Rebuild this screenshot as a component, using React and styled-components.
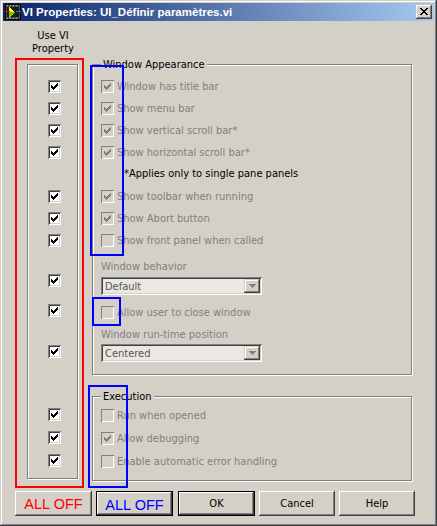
import React from 'react'
import styled, { createGlobalStyle } from 'styled-components'

const GlobalStyle = createGlobalStyle`
  html, body {
    margin: 0;
    padding: 0;
    background: #d4d0c8;
  }
  body {
    font-family: "DejaVu Sans Condensed", "Liberation Sans", sans-serif;
    font-size: 11px;
  }
`

const CHECK = ['......#', '.....##', '#...###', '##.###.', '#####..', '.###...', '..#....']
const checkPath = CHECK.map((row, y) =>
  [...row].map((c, x) => (c === '#' ? `M${x} ${y}h1v1h-1z` : '')).join('')
).join('')

const CLOSE_X = ['##....##', '.##..##.', '..####..', '...##...', '..####..', '.##..##.', '##....##']
const closePath = CLOSE_X.map((row, y) =>
  [...row].map((c, x) => (c === '#' ? `M${x} ${y}h1v1h-1z` : '')).join('')
).join('')

// tops of the left column boxes, in page pixels
const leftTops = [80, 102, 124, 146, 190, 212, 234, 274, 304, 345, 408, 431, 454]

export default function App() {
  return (
    <Window>
      <GlobalStyle />
      <TitleBar>
        <VIIcon />
        <Title>VI Properties: UI_Définir paramètres.vi</Title>
        <CloseButton>
          <svg width="8" height="7" viewBox="0 0 8 7" shapeRendering="crispEdges">
            <path d={closePath} fill="#000" />
          </svg>
        </CloseButton>
      </TitleBar>

      <Body>
        <Main>
          <LeftCol>
            <ColumnHeader>Use VI<br />Property</ColumnHeader>
            <RedBox>
              <CheckColumn>
                {leftTops.map((top, i) => (
                  <Checkbox key={i} checked $mt={i === 0 ? top - 65 : top - leftTops[i - 1] - 13} />
                ))}
              </CheckColumn>
            </RedBox>
          </LeftCol>

          <RightCol>
            <Group $pb={12}>
              <Legend>Window Appearance</Legend>
              <Row $mt={9} $disabled><Checkbox checked disabled />Window has title bar</Row>
              <Row $mt={9} $disabled><Checkbox checked disabled />Show menu bar</Row>
              <Row $mt={9} $disabled><Checkbox checked disabled />Show vertical scroll bar*</Row>
              <Row $mt={9} $disabled><Checkbox checked disabled />Show horizontal scroll bar*</Row>
              <Note>*Applies only to single pane panels</Note>
              <Row $mt={10} $disabled><Checkbox checked disabled />Show toolbar when running</Row>
              <Row $mt={9} $disabled><Checkbox checked disabled />Show Abort button</Row>
              <Row $mt={9} $disabled><Checkbox disabled />Show front panel when called</Row>
              <FieldLabel $mt={13}>Window behavior</FieldLabel>
              <Select $mt={4}>
                <span>Default</span>
                <ArrowButton>
                  <svg width="7" height="4" viewBox="0 0 7 4" shapeRendering="crispEdges">
                    <path d="M0 0h7v1h-1v1h-1v1h-1v1h-1v-1h-1v-1h-1v-1h-1z" fill="#808080" />
                  </svg>
                </ArrowButton>
              </Select>
              <Row $mt={11} $disabled><Checkbox disabled />Allow user to close window</Row>
              <FieldLabel $mt={9}>Window run-time position</FieldLabel>
              <Select $mt={3}>
                <span>Centered</span>
                <ArrowButton>
                  <svg width="7" height="4" viewBox="0 0 7 4" shapeRendering="crispEdges">
                    <path d="M0 0h7v1h-1v1h-1v1h-1v1h-1v-1h-1v-1h-1v-1h-1z" fill="#808080" />
                  </svg>
                </ArrowButton>
              </Select>
            </Group>

            <Group $pb={12} $mt={15}>
              <Legend>Execution</Legend>
              <Row $mt={6} $disabled><Checkbox disabled />Run when opened</Row>
              <Row $mt={10} $disabled><Checkbox checked disabled />Allow debugging</Row>
              <Row $mt={10} $disabled><Checkbox disabled />Enable automatic error handling</Row>
            </Group>

            <BlueMark $left={-2} $top={7} $w={34} $h={191} />
            <BlueMark $left={0} $top={239} $w={29} $h={29} />
            <BlueMark $left={-4} $top={327} $w={40} $h={103} />
          </RightCol>
        </Main>

        <ButtonRow>
          <Button $w={77} $color="#ff0000" $big>ALL OFF</Button>
          <Button $w={77} $color="#0000ff" $big $low $default $ml={4}>ALL OFF</Button>
          <Button $w={77} $default $ml={5}>OK</Button>
          <Button $w={76} $ml={4}>Cancel</Button>
          <Button $w={76} $ml={4}>Help</Button>
        </ButtonRow>
      </Body>
    </Window>
  )
}

function Checkbox({ checked, disabled, $mt }) {
  return (
    <Box $disabled={disabled} $mt={$mt}>
      {checked && (
        <svg width="7" height="7" viewBox="0 0 7 7" shapeRendering="crispEdges">
          <path d={checkPath} fill={disabled ? '#808080' : '#000'} />
        </svg>
      )}
    </Box>
  )
}

function VIIcon() {
  return (
    <IconWrap>
      <svg width="16" height="16" viewBox="0 0 16 16" shapeRendering="crispEdges">
        <rect x="0" y="0" width="16" height="16" fill="#000" />
        <rect x="1" y="1" width="14" height="14" fill="#505050" />
        <path d="M2 1h1v1h-1zM5 1h1v1h-1zM8 1h1v1h-1zM11 1h1v1h-1zM2 14h1v1h-1zM5 14h1v1h-1zM8 14h1v1h-1zM11 14h1v1h-1z" fill="#c0c0c0" />
        <rect x="2" y="3" width="12" height="10" fill="#1a1a1a" />
        <path d="M4 3h1v1h1v1h1v1h1v1h1v1h1v1h-1v1h-1v1h-1v1h-1v1h-1v1h-1z" fill="#ffff00" />
        <path d="M4 8h6v1h-1v1h-1v1h-1v1h-1v1h-1v1h-1z" fill="#80c000" />
        <rect x="0" y="7" width="5" height="1" fill="#ff0000" />
        <rect x="11" y="7" width="5" height="1" fill="#4060ff" />
      </svg>
    </IconWrap>
  )
}

const Window = styled.div`
  width: 437px;
  height: 526px;
  box-sizing: border-box;
  padding: 3px;
  background: #d4d0c8;
  box-shadow: inset -1px -1px #404040, inset 1px 1px #d4d0c8, inset -2px -2px #808080, inset 2px 2px #fff;
  display: flex;
  flex-direction: column;
  overflow: hidden;
`

const TitleBar = styled.div`
  height: 18px;
  display: flex;
  align-items: center;
  padding: 0 2px;
  background: linear-gradient(to right, #0a246a, #a6caf0);
`

const IconWrap = styled.div`
  width: 16px;
  height: 16px;
  display: flex;
`

const Title = styled.span`
  margin-left: 1px;
  color: #fff;
  font-family: "Liberation Sans", sans-serif;
  font-weight: bold;
  font-size: 11.5px;
  white-space: nowrap;
`

const CloseButton = styled.div`
  margin-left: auto;
  width: 16px;
  height: 14px;
  box-sizing: border-box;
  background: #d4d0c8;
  box-shadow: inset -1px -1px #404040, inset 1px 1px #fff, inset -2px -2px #808080, inset 2px 2px #d4d0c8;
  display: flex;
  align-items: center;
  justify-content: center;
  padding: 0 1px 1px 0;
`

const Body = styled.div`
  padding: 0 0 0 12px;
  display: flex;
  flex-direction: column;
`

const Main = styled.div`
  display: flex;
  align-items: flex-start;
`

const LeftCol = styled.div`
  width: 69px;
  display: flex;
  flex-direction: column;
`

const ColumnHeader = styled.div`
  margin-top: 8px;
  height: 26px;
  margin-bottom: 3px;
  padding-left: 7px;
  line-height: 13px;
  text-align: center;
  color: #000;
`

const RedBox = styled.div`
  height: 430px;
  box-sizing: border-box;
  border: 2px solid #ff0000;
  padding: 4px 4px 7px 10px;
  display: flex;
`

const CheckColumn = styled.div`
  width: 51px;
  box-sizing: border-box;
  border: 1px solid #808080;
  box-shadow: 1px 1px 0 #fff, inset 1px 1px 0 #fff;
  padding-left: 20px;
  display: flex;
  flex-direction: column;
`

const Box = styled.span`
  flex: none;
  width: 13px;
  height: 13px;
  box-sizing: border-box;
  margin-top: ${p => p.$mt || 0}px;
  background: ${p => (p.$disabled ? '#d4d0c8' : '#fff')};
  box-shadow: inset 1px 1px #808080, inset -1px -1px #fff, inset 2px 2px ${p => (p.$disabled ? '#d4d0c8' : '#404040')}, inset -2px -2px #d4d0c8;
  display: flex;
  align-items: center;
  justify-content: center;
`

const RightCol = styled.div`
  position: relative;
  margin-left: 8px;
  margin-top: 37px;
  width: 321px;
  display: flex;
  flex-direction: column;
`

const Group = styled.fieldset`
  margin: ${p => p.$mt || 0}px 0 0 0;
  padding: 0 0 ${p => p.$pb}px 8px;
  width: 320px;
  min-width: 0;
  box-sizing: border-box;
  border: 1px solid #808080;
  box-shadow: 1px 1px 0 #fff, inset 1px 1px 0 #fff;
  display: flex;
  flex-direction: column;
  align-items: flex-start;
`

const Legend = styled.legend`
  padding: 0 2px;
  margin: 0;
  line-height: 13px;
  color: #000;
  background: #d4d0c8;
`

const Row = styled.div`
  display: flex;
  align-items: center;
  gap: 3px;
  height: 13px;
  margin-top: ${p => p.$mt}px;
  color: ${p => (p.$disabled ? '#808080' : '#000')};
  white-space: nowrap;
`

const Note = styled.div`
  margin-top: 8px;
  margin-left: 23px;
  line-height: 13px;
  color: #000;
`

const FieldLabel = styled.div`
  margin-top: ${p => p.$mt}px;
  line-height: 13px;
  color: #808080;
`

const Select = styled.div`
  margin-top: ${p => p.$mt}px;
  width: 161px;
  height: 18px;
  box-sizing: border-box;
  padding: 2px 2px 2px 4px;
  display: flex;
  align-items: center;
  justify-content: space-between;
  background: #eae8e3;
  color: #555;
  box-shadow: inset 1px 1px #808080, inset -1px -1px #fff, inset 2px 2px #404040, inset -2px -2px #d4d0c8;
`

const ArrowButton = styled.span`
  width: 16px;
  height: 14px;
  box-sizing: border-box;
  background: #d4d0c8;
  box-shadow: inset -1px -1px #404040, inset 1px 1px #d4d0c8, inset -2px -2px #808080, inset 2px 2px #fff;
  display: flex;
  align-items: center;
  justify-content: center;
`

const BlueMark = styled.div`
  position: absolute;
  left: ${p => p.$left}px;
  top: ${p => p.$top}px;
  width: ${p => p.$w}px;
  height: ${p => p.$h}px;
  box-sizing: border-box;
  border: 2px solid #0000ff;
  pointer-events: none;
`

const ButtonRow = styled.div`
  display: flex;
  margin-top: 3px;
`

const Button = styled.button`
  width: ${p => p.$w}px;
  height: 25px;
  margin: 0 0 0 ${p => p.$ml || 0}px;
  padding: ${p => (p.$low ? '3px 0 0' : '0')};
  box-sizing: border-box;
  border: ${p => (p.$default ? '1px solid #000' : 'none')};
  background: #d4d0c8;
  box-shadow: inset -1px -1px #404040, inset 1px 1px #fff, inset -2px -2px #808080, inset 2px 2px #d4d0c8;
  color: ${p => p.$color || '#000'};
  font-family: ${p => (p.$big ? '"Liberation Sans", Arial, sans-serif' : '"DejaVu Sans Condensed", "Liberation Sans", sans-serif')};
  font-size: ${p => (p.$big ? '14.5px' : '11px')};
  display: flex;
  align-items: center;
  justify-content: center;
`
